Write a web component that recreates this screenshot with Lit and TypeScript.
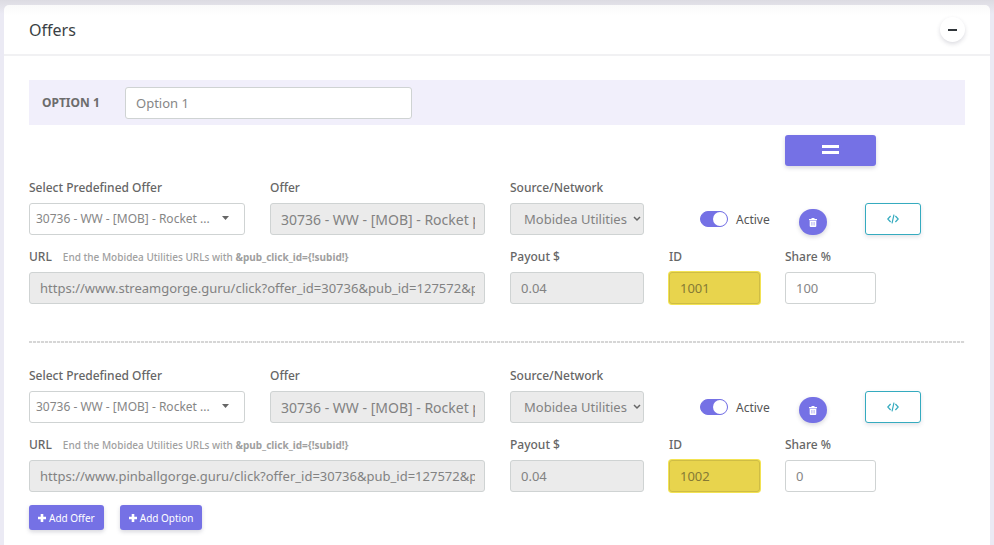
import { LitElement, html, css, svg } from "lit";
import { customElement, property } from "lit/decorators.js";

interface Offer {
  predefined: string;
  name: string;
  network: string;
  url: string;
  payout: string;
  id: string;
  share: string;
}

const OFFERS: Offer[] = [
  {
    predefined: "30736 - WW - [MOB] - Rocket ...",
    name: "30736 - WW - [MOB] - Rocket p",
    network: "Mobidea Utilities",
    url: "https://www.streamgorge.guru/click?offer_id=30736&pub_id=127572&pub_click_id={!subid!}",
    payout: "0.04",
    id: "1001",
    share: "100",
  },
  {
    predefined: "30736 - WW - [MOB] - Rocket ...",
    name: "30736 - WW - [MOB] - Rocket p",
    network: "Mobidea Utilities",
    url: "https://www.pinballgorge.guru/click?offer_id=30736&pub_id=127572&pub_click_id={!subid!}",
    payout: "0.04",
    id: "1002",
    share: "0",
  },
];

const plusIcon = svg`<svg width="8" height="8" viewBox="0 0 8 8" aria-hidden="true"><path d="M2.700 0h2.600v2.700H8v2.600H5.300V8H2.700V5.300H0V2.700h2.700z" fill="currentColor"/></svg>`;

const shared = css`
  * {
    box-sizing: border-box;
  }
  button,
  input,
  select {
    font-family: inherit;
    margin: 0;
  }
  button {
    padding: 0;
    border: 0;
    cursor: pointer;
  }
  svg {
    display: block;
  }
  .columns {
    display: grid;
    grid-template-columns:
      minmax(0, 216fr) minmax(0, 215fr) minmax(0, 134fr)
      minmax(0, 91fr) minmax(0, 91fr) minmax(0, 64fr);
    gap: 12px 25px;
  }
  .control {
    display: block;
    width: 100%;
    min-width: 0;
    height: 32px;
    padding: 0 9px 0 10px;
    border: 1px solid #cfd3d3;
    border-radius: 3px;
    background: #fff;
    color: #868686;
    font-size: 13px;
    line-height: 20px;
    opacity: 1;
  }
  .primary {
    border-radius: 3px;
    background: #7571e5;
    color: #fff;
    box-shadow: 0 2px 4px rgba(60, 60, 90, 0.2);
  }
`;

@customElement("offer-row")
export class OfferRow extends LitElement {
  @property({ attribute: false }) offer!: Offer;

  static styles = [
    shared,
    css`
      :host {
        display: block;
      }
      .field {
        display: flex;
        flex-direction: column;
        gap: 5px;
        min-width: 0;
      }
      .wide {
        grid-column: span 2;
      }
      .label {
        display: flex;
        align-items: center;
        height: 20px;
        color: #666;
        font-size: 12px;
        font-weight: 500;
        line-height: 20px;
        white-space: nowrap;
      }
      .hint {
        margin-left: 11px;
        color: #a0a0a0;
        font-size: 10px;
      }
      .off {
        background: #ebebeb;
        color: #828282;
      }
      .name {
        font-size: 14px;
      }
      .mark {
        background: #e8d44d;
        border-color: #cfbd45;
        color: #857a35;
        box-shadow: 0 0 0 1px #f3e352;
      }
      .picker {
        position: relative;
      }
      .picker select {
        appearance: none;
      }
      .small {
        padding: 0 28px 0 6px;
        font-size: 12px;
      }
      .source {
        padding: 0 0 0 13px;
      }
      .arrow {
        position: absolute;
        top: 0;
        right: 16px;
        height: 100%;
        display: flex;
        align-items: center;
        color: #666;
        pointer-events: none;
      }
      .near {
        right: 3px;
      }
      .actions {
        grid-column: 4 / 7;
        display: flex;
        align-items: flex-end;
        padding-left: 31px;
      }
      .active {
        display: flex;
        align-items: center;
        gap: 8px;
        height: 32px;
        color: #555;
        font-size: 12px;
      }
      .toggle {
        appearance: none;
        display: flex;
        justify-content: flex-end;
        width: 28px;
        height: 16px;
        border: 1px solid #7571e5;
        border-radius: 8px;
        background: #7571e5;
      }
      .toggle::before {
        content: "";
        width: 14px;
        height: 14px;
        border-radius: 50%;
        background: #fff;
      }
      .toggle:not(:checked) {
        justify-content: flex-start;
        background: #b9b9c4;
        border-color: #b9b9c4;
      }
      .text {
        width: 34px;
      }
      .trash {
        display: flex;
        align-items: center;
        justify-content: center;
        width: 28px;
        height: 26px;
        margin: 0 38px 0 29px;
        border-radius: 14px;
      }
      .code {
        display: flex;
        align-items: center;
        justify-content: center;
        width: 56px;
        height: 32px;
        border: 1px solid #35abbf;
        border-radius: 3px;
        background: #fff;
        color: #35abbf;
        box-shadow: 0 2px 4px rgba(60, 60, 90, 0.14);
      }
    `,
  ];

  render() {
    const o = this.offer;
    return html`
      <div class="columns">
        <div class="field">
          <label class="label" for="pre">Select Predefined Offer</label>
          <div class="picker">
            <select class="control small" id="pre"><option>${o.predefined}</option></select>
            <span class="arrow">
              <svg width="7" height="8" viewBox="0 0 7 8"><path d="M0 1h7L3.500 5z" fill="currentColor" /></svg>
            </span>
          </div>
        </div>
        <div class="field">
          <label class="label" for="name">Offer</label>
          <input class="control off name" id="name" disabled .value=${o.name} />
        </div>
        <div class="field">
          <label class="label" for="src">Source/Network</label>
          <div class="picker">
            <select class="control off source" id="src" disabled><option>${o.network}</option></select>
            <span class="arrow near">
              <svg width="8" height="6" viewBox="0 0 8 6">
                <path d="M1 1l3 3 3-3" fill="none" stroke="currentColor" stroke-width="1.500" />
              </svg>
            </span>
          </div>
        </div>
        <div class="actions">
          <label class="active"><input class="toggle" type="checkbox" checked /><span class="text">Active</span></label>
          <button class="primary trash" aria-label="Delete offer">
            <svg width="8" height="9" viewBox="0 0 8 9">
              <path d="M2.500 0h3v1H8v1.200H0V1h2.500zM.7 2.700h6.600V8q0 1-1 1H1.700q-1 0-1-1z" fill="#fff" />
              <path d="M2.600 4v3.500M4 4v3.500M5.400 4v3.500" stroke="#7571e5" stroke-width=".4" />
            </svg>
          </button>
          <button class="code" aria-label="Show code">
            <svg width="12" height="10" viewBox="0 0 12 10" fill="none" stroke="currentColor" stroke-width="1.200">
              <path d="M3.600 2L.8 5l2.800 3M8.400 2l2.800 3-2.800 3M7 .7L5 9.300" />
            </svg>
          </button>
        </div>
        <div class="field wide">
          <label class="label" for="url">
            URL <span class="hint">End the Mobidea Utilities URLs with <b>&amp;pub_click_id={!subid!}</b></span>
          </label>
          <input class="control off" id="url" disabled .value=${o.url} />
        </div>
        <div class="field">
          <label class="label" for="pay">Payout $</label>
          <input class="control off" id="pay" disabled .value=${o.payout} />
        </div>
        <div class="field">
          <label class="label" for="oid">ID</label>
          <input class="control mark" id="oid" .value=${o.id} />
        </div>
        <div class="field">
          <label class="label" for="share">Share %</label>
          <input class="control" id="share" .value=${o.share} />
        </div>
      </div>
    `;
  }
}

@customElement("app-root")
export class AppRoot extends LitElement {
  static styles = [
    shared,
    css`
      :host {
        display: flex;
        min-height: 100vh;
        padding: 5px 4px 0;
        background: linear-gradient(#dcdbe2, #e2e1e8 5px, #ebeaf4 14px);
        font-family: "Noto Sans", "Open Sans", sans-serif;
        box-sizing: border-box;
      }
      .card {
        flex: 1;
        min-width: 0;
        border-radius: 5px 5px 0 0;
        background: linear-gradient(#fafafa, #fff 10px);
      }
      .head {
        display: flex;
        align-items: center;
        justify-content: space-between;
        height: 51px;
        padding: 0 25px;
        border-bottom: 2px solid #f1f1f3;
      }
      .title {
        margin: 0;
        color: #3a3f44;
        font-size: 16px;
        font-weight: 400;
        line-height: 24px;
      }
      .fold {
        display: flex;
        align-items: center;
        justify-content: center;
        width: 25px;
        height: 25px;
        border-radius: 50%;
        background: #fff;
        color: #30353a;
        box-shadow: 0 2px 4px rgba(60, 60, 90, 0.18);
      }
      .body {
        padding: 24px 25px 14px;
      }
      .option {
        display: grid;
        grid-template-columns: 58px minmax(0, 287fr) minmax(0, 515fr);
        align-items: center;
        column-gap: 25px;
        height: 45px;
        padding: 0 13px;
        background: #f1effb;
      }
      .caption {
        color: #6c6c6c;
        font-size: 12px;
        font-weight: 700;
        white-space: nowrap;
      }
      .tools {
        margin: 10px 0 12px;
      }
      .drag {
        grid-column: 5;
        display: flex;
        align-items: center;
        justify-content: center;
        height: 31px;
        padding-bottom: 3px;
      }
      .rule {
        height: 2px;
        margin: 37px 0 23px;
        border: 0;
        background: repeating-linear-gradient(90deg, #d6d6d6 0 3px, #fbfbfb 3px 4px);
      }
      .foot {
        display: flex;
        gap: 16px;
        margin-top: 13px;
      }
      .add {
        display: flex;
        align-items: center;
        gap: 3px;
        height: 25px;
        padding: 0 9px;
        font-size: 10px;
      }
    `,
  ];

  render() {
    return html`
      <main class="card">
        <header class="head">
          <h1 class="title">Offers</h1>
          <button class="fold" aria-label="Collapse">
            <svg width="9" height="2" viewBox="0 0 9 2"><path d="M0 0h9v2H0z" fill="currentColor" /></svg>
          </button>
        </header>
        <div class="body">
          <div class="option">
            <label class="caption" for="opt">OPTION 1</label>
            <input class="control" id="opt" .value=${"Option 1"} />
          </div>
          <div class="columns tools">
            <button class="primary drag" aria-label="Reorder">
              <svg width="17" height="9" viewBox="0 0 17 9"><path d="M0 0h17v3H0zM0 6h17v3H0z" fill="#fff" /></svg>
            </button>
          </div>
          ${OFFERS.map(
            (o, i) => html`${i ? html`<hr class="rule" />` : ""}<offer-row .offer=${o}></offer-row>`
          )}
          <div class="foot">
            <button class="primary add">${plusIcon}<span>Add Offer</span></button>
            <button class="primary add">${plusIcon}<span>Add Option</span></button>
          </div>
        </div>
      </main>
    `;
  }
}
